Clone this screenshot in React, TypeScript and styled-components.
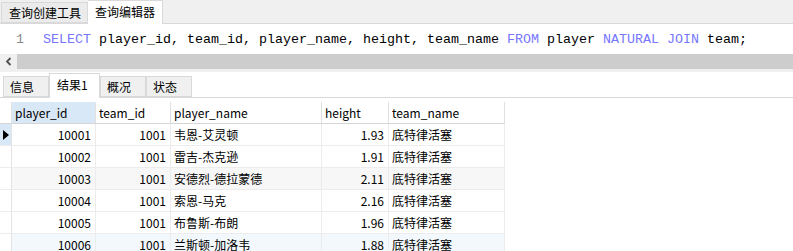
import React from 'react';
import styled, { createGlobalStyle } from 'styled-components';

const GlobalStyle = createGlobalStyle`
  body {
    margin: 0;
    background: #ffffff;
    font-family: 'Noto Sans CJK SC', 'Noto Sans', sans-serif;
    font-size: 12px;
    color: #000;
  }
`;

const rows = [
  { id: '10001', team: '1001', name: '韦恩-艾灵顿', height: '1.93', teamName: '底特律活塞', tint: 'none', current: true },
  { id: '10002', team: '1001', name: '雷吉-杰克逊', height: '1.91', teamName: '底特律活塞', tint: 'none' },
  { id: '10003', team: '1001', name: '安德烈-德拉蒙德', height: '2.11', teamName: '底特律活塞', tint: 'gray' },
  { id: '10004', team: '1001', name: '索恩-马克', height: '2.16', teamName: '底特律活塞', tint: 'none' },
  { id: '10005', team: '1001', name: '布鲁斯-布朗', height: '1.96', teamName: '底特律活塞', tint: 'none' },
  { id: '10006', team: '1001', name: '兰斯顿-加洛韦', height: '1.88', teamName: '底特律活塞', tint: 'blue' },
];

const App = () => {
  return (
    <Page>
      <GlobalStyle />
      <TopTabs>
        <TopTab>查询创建工具</TopTab>
        <TopTab $active>查询编辑器</TopTab>
      </TopTabs>

      <Editor>
        <LineNo>1</LineNo>
        <Code>
          <Kw>SELECT</Kw> player_id, team_id, player_name, height, team_name <Kw>FROM</Kw> player{' '}
          <Kw>NATURAL JOIN</Kw> team;
        </Code>
      </Editor>

      <HScroll>
        <ScrollArrow>
          <svg width="7" height="9" viewBox="0 0 7 9">
            <path d="M5.5 1 L2 4.5 L5.5 8" fill="none" stroke="#505050" strokeWidth="1.8" />
          </svg>
        </ScrollArrow>
        <ScrollThumb />
      </HScroll>
      <Strip />

      <ResultTabs>
        <ResultTab>信息</ResultTab>
        <ResultTab $active>结果1</ResultTab>
        <ResultTab>概况</ResultTab>
        <ResultTab>状态</ResultTab>
      </ResultTabs>

      <Grid>
        <Corner />
        <HeadCell $selected>player_id</HeadCell>
        <HeadCell>team_id</HeadCell>
        <HeadCell>player_name</HeadCell>
        <HeadCell>height</HeadCell>
        <HeadCell>team_name</HeadCell>
        {rows.map((r) => (
          <React.Fragment key={r.id}>
            <Indicator $current={!!r.current}>
              {r.current && (
                <svg width="6" height="10" viewBox="0 0 6 10">
                  <path d="M0 0 L6 5 L0 10 Z" fill="#000" />
                </svg>
              )}
            </Indicator>
            <Cell $tint={r.tint} $num>{r.id}</Cell>
            <Cell $tint={r.tint} $num>{r.team}</Cell>
            <Cell $tint={r.tint}>{r.name}</Cell>
            <Cell $tint={r.tint} $num>{r.height}</Cell>
            <Cell $tint={r.tint}>{r.teamName}</Cell>
          </React.Fragment>
        ))}
      </Grid>
    </Page>
  );
};

const Page = styled.div`
  width: 793px;
  height: 251px;
  overflow: hidden;
  background: #fff;
`;

const TopTabs = styled.div`
  display: flex;
  align-items: flex-end;
  height: 24px;
  box-sizing: border-box;
  padding-left: 1px;
  background: #f0f0f0;
  border-bottom: 1px solid #d9d9d9;
`;

const TopTab = styled.div<{ $active?: boolean }>`
  display: flex;
  align-items: center;
  box-sizing: border-box;
  height: ${({ $active }) => ($active ? '24px' : '21px')};
  margin-bottom: ${({ $active }) => ($active ? '-1px' : '0')};
  padding: ${({ $active }) => ($active ? '0 7px 2px 7px' : '0 6px 0 7px')};
  background: ${({ $active }) => ($active ? '#ffffff' : '#ebebeb')};
  border: 1px solid #d9d9d9;
  border-bottom: ${({ $active }) => ($active ? 'none' : '1px solid #d9d9d9')};
  border-left: ${({ $active }) => ($active ? 'none' : '1px solid #d9d9d9')};
  font-size: 12px;
  color: #000;
  white-space: nowrap;
`;

const Editor = styled.div`
  display: flex;
  align-items: center;
  height: 30px;
  background: #fff;
`;

const LineNo = styled.div`
  width: 43px;
  box-sizing: border-box;
  padding-left: 16px;
  font-family: 'Liberation Mono', monospace;
  font-size: 13.33px;
  color: #8a8a8a;
`;

const Code = styled.div`
  font-family: 'Liberation Mono', monospace;
  font-size: 13.33px;
  color: #000;
  white-space: pre;
`;

const Kw = styled.span`
  color: #7676ff;
`;

const HScroll = styled.div`
  display: flex;
  height: 15px;
`;

const ScrollArrow = styled.div`
  width: 17px;
  display: flex;
  align-items: center;
  justify-content: center;
  background: #f0f0f0;
`;

const ScrollThumb = styled.div`
  flex: 1;
  background: #cdcdcd;
`;

const Strip = styled.div`
  height: 3px;
  background: #f0f0f0;
`;

const ResultTabs = styled.div`
  display: flex;
  align-items: flex-end;
  height: 26px;
  box-sizing: border-box;
  padding-left: 3px;
  background: #fff;
  border-bottom: 1px solid #d9d9d9;
`;

const ResultTab = styled.div<{ $active?: boolean }>`
  display: flex;
  align-items: center;
  box-sizing: border-box;
  height: ${({ $active }) => ($active ? '25px' : '21px')};
  margin-bottom: ${({ $active }) => ($active ? '-1px' : '0')};
  padding: ${({ $active }) => ($active ? '0 0 3px 7px' : '0 0 0 6px')};
  width: ${({ $active }) => ($active ? '51px' : '46px')};
  background: ${({ $active }) => ($active ? '#ffffff' : '#f0f0f0')};
  border: 1px solid #d9d9d9;
  border-bottom: ${({ $active }) => ($active ? 'none' : '1px solid #d9d9d9')};
  font-size: 12px;
  color: #000;
  white-space: nowrap;
`;

const Grid = styled.div`
  display: grid;
  grid-template-columns: 12px 84px 75px 151px 67px 116px;
  grid-auto-rows: 22px;
  margin-top: 4px;
  width: 505px;
`;

const Corner = styled.div`
  border-bottom: 1px solid #d5d5d5;
  border-right: 1px solid #e3e3e3;
`;

const HeadCell = styled.div<{ $selected?: boolean }>`
  display: flex;
  align-items: center;
  box-sizing: border-box;
  padding-left: 3px;
  background: ${({ $selected }) => ($selected ? '#d9e8f7' : '#ffffff')};
  border-right: 1px solid #e0e0e0;
  border-bottom: 1px solid #d5d5d5;
  font-size: 12px;
  color: #000;
`;

const Indicator = styled.div<{ $current: boolean }>`
  display: flex;
  align-items: center;
  justify-content: center;
  box-sizing: border-box;
  background: ${({ $current }) => ($current ? '#d9e8f7' : '#ffffff')};
  border-right: 1px solid #e3e3e3;
  border-bottom: 1px solid #ececec;
`;

const tints: Record<string, string> = {
  none: '#ffffff',
  gray: '#f7f7f7',
  blue: '#f3f8fd',
};

const Cell = styled.div<{ $tint: string; $num?: boolean }>`
  display: flex;
  align-items: center;
  justify-content: ${({ $num }) => ($num ? 'flex-end' : 'flex-start')};
  box-sizing: border-box;
  padding: ${({ $num }) => ($num ? '0 4px 0 0' : '0 0 0 3px')};
  background: ${({ $tint }) => tints[$tint]};
  border-right: 1px solid #ececec;
  border-bottom: 1px solid #ececec;
  font-size: 12px;
  color: #000;
  white-space: nowrap;
  overflow: hidden;
`;

export default App;
